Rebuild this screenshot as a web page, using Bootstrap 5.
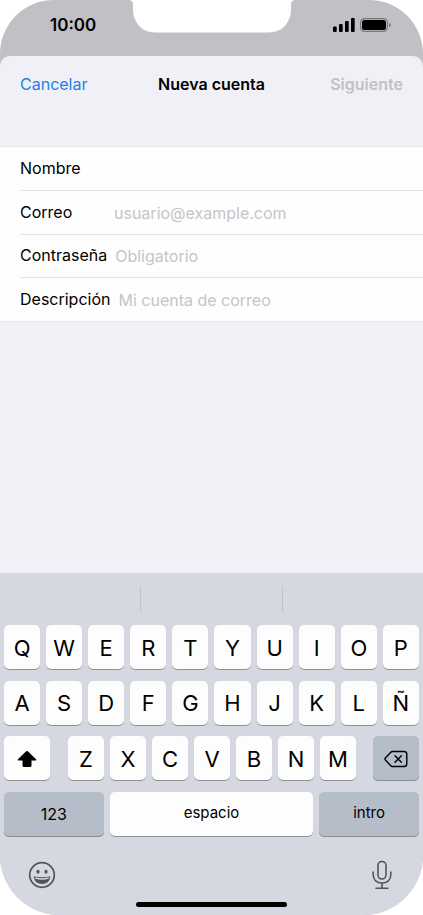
<!DOCTYPE html>
<html lang="es">
<head>
<meta charset="utf-8">
<meta name="viewport" content="width=device-width, initial-scale=1">
<title>Nueva cuenta</title>
<link href="https://cdn.jsdelivr.net/npm/bootstrap@5.3.0/dist/css/bootstrap.min.css" rel="stylesheet">
<style>
body { font-family: Inter, "Liberation Sans", sans-serif; font-size: 16px; line-height: 20px; color: #000; background: #fff; }
.phone { background: #c1c0c5; border-radius: 54px 54px 60px 60px; }
.status { display: grid; grid-template-columns: 1fr 168px 1fr; height: 56px; }
.status-side { height: 50px; }
.clock { font-size: 17px; padding-left: 50px; }
.signals { padding-right: 32px; gap: 5px; }
.sheet { background: #f1f0f6; border-radius: 10px 10px 0 0; }
.sheet-bar { display: grid; grid-template-columns: 1fr auto 1fr; padding: 18px 20px 52px; }
.bar-action { border: 0; background: none; padding: 0; color: #1a82e8; }
.bar-action:disabled { color: #c1c0c5; }
.fields { background: #fefefe; border-top: 1px solid #e4e4e8; border-bottom: 1px solid #e4e4e8; padding-left: 20px; }
.field { height: 43px; gap: 8px; padding-bottom: 2px; }
.field + .field { border-top: 1px solid #e4e4e6; }
.field:nth-child(even) { height: 44px; }
.field label { min-width: 86px; }
.field input { border: 0; outline: 0; background: none; padding: 2px 0 0; min-width: 0; }
.field input::placeholder { color: #c5c5c7; opacity: 1; }
.keyboard { background: #d5d8e0; }
.suggestions { height: 52px; padding: 13px 0; }
.suggestions button { border: 0; background: none; height: 26px; }
.suggestions button + button { border-left: 1px solid #c0c3ca; }
.keys { padding: 0 4px; height: 212px; }
.key-row { gap: 6px; }
.key { border: 0; padding: 0; height: 45px; border-radius: 5px; background: #fdfdfd; box-shadow: inset 0 -1px 0 #8c8f94; color: #000; font-size: 22px; flex: 1 1 0; min-width: 0; }
.key-dark { background: #b5bdc9; }
.key-digits { font-size: 16px; }
.key-word { font-size: 15px; padding-bottom: 2px; }
.key-side { flex: 0 0 46px; }
.shift { margin-right: 12px; }
.erase { margin-left: 11px; }
.key-space { flex: 0 0 49%; }
.tools { padding: 23px 31px 12px 28px; }
.tools button { border: 0; background: none; padding: 0; color: #50555c; line-height: 0; }
.home-bar { width: 151px; height: 5px; border-radius: 3px; background: #000; margin-bottom: 8px; }
svg { display: block; }
</style>
<script src="https://cdn.jsdelivr.net/npm/bootstrap@5.3.0/dist/js/bootstrap.bundle.min.js"></script>
</head>
<body>
<div class="phone min-vh-100 d-flex flex-column overflow-hidden">
  <header class="status">
    <div class="status-side clock d-flex align-items-center fw-semibold">10:00</div>
    <svg width="168" height="34" viewBox="0 0 168 34" aria-hidden="true"><path fill="#fff" d="M0 0Q5 0 5 5V11C6 24 15 32.500 27 32.500H141C153 32.500 162 24 163 11V5Q163 0 168 0Z"/></svg>
    <div class="status-side signals d-flex align-items-center justify-content-end">
      <svg width="23" height="14" viewBox="0 0 23 14" aria-hidden="true"><rect x="1" y="8.500" width="3.700" height="5.500" rx="1"/><rect x="7" y="6" width="3.700" height="8" rx="1"/><rect x="13" y="3" width="3.700" height="11" rx="1"/><rect x="19" y="0" width="3.700" height="14" rx="1"/></svg>
      <svg width="31" height="14" viewBox="0 0 31 14" aria-hidden="true"><rect x=".6" y=".6" width="26.800" height="12.800" rx="4" fill="none" stroke="#77777a" stroke-width="1.200"/><rect x="2" y="2" width="24" height="10" rx="2.500"/><path fill="#77777a" d="M29 4.800Q31 5.500 31 7T29 9.200Z"/></svg>
    </div>
  </header>

  <main class="sheet flex-grow-1 d-flex flex-column">
    <div class="sheet-bar align-items-center">
      <button type="button" class="bar-action text-start">Cancelar</button>
      <h1 class="fs-6 fw-semibold m-0 lh-sm">Nueva cuenta</h1>
      <button type="button" class="bar-action text-end fw-semibold" disabled>Siguiente</button>
    </div>
    <form class="fields">
      <div class="field d-flex align-items-center"><label for="nombre">Nombre</label><input class="flex-grow-1" id="nombre" type="text"></div>
      <div class="field d-flex align-items-center"><label for="correo">Correo</label><input class="flex-grow-1" id="correo" type="email" placeholder="usuario@example.com"></div>
      <div class="field d-flex align-items-center"><label for="clave">Contraseña</label><input class="flex-grow-1" id="clave" type="password" placeholder="Obligatorio"></div>
      <div class="field d-flex align-items-center"><label for="descripcion">Descripción</label><input class="flex-grow-1" id="descripcion" type="text" placeholder="Mi cuenta de correo"></div>
    </form>
  </main>

  <section class="keyboard" aria-label="Teclado">
    <div class="suggestions d-flex">
      <button type="button" class="flex-fill" aria-label="Sugerencia 1"></button>
      <button type="button" class="flex-fill" aria-label="Sugerencia 2"></button>
      <button type="button" class="flex-fill" aria-label="Sugerencia 3"></button>
    </div>
    <div class="keys d-flex flex-column justify-content-between">
      <div class="key-row d-flex">
        <button type="button" class="key">Q</button><button type="button" class="key">W</button><button type="button" class="key">E</button><button type="button" class="key">R</button><button type="button" class="key">T</button><button type="button" class="key">Y</button><button type="button" class="key">U</button><button type="button" class="key">I</button><button type="button" class="key">O</button><button type="button" class="key">P</button>
      </div>
      <div class="key-row d-flex">
        <button type="button" class="key">A</button><button type="button" class="key">S</button><button type="button" class="key">D</button><button type="button" class="key">F</button><button type="button" class="key">G</button><button type="button" class="key">H</button><button type="button" class="key">J</button><button type="button" class="key">K</button><button type="button" class="key">L</button><button type="button" class="key">Ñ</button>
      </div>
      <div class="key-row d-flex">
        <button type="button" class="key key-side shift" aria-label="Mayúsculas"><svg class="mx-auto" width="20" height="18" viewBox="0 0 20 18"><path d="M9.200 1.300Q10 .6 10.800 1.300L18.800 9Q20 10.500 18.300 10.500H14.500V15.500Q14.500 17 13 17H7Q5.500 17 5.500 15.500V10.500H1.700Q0 10.500 1.200 9Z"/></svg></button>
        <button type="button" class="key">Z</button><button type="button" class="key">X</button><button type="button" class="key">C</button><button type="button" class="key">V</button><button type="button" class="key">B</button><button type="button" class="key">N</button><button type="button" class="key">M</button>
        <button type="button" class="key key-dark key-side erase" aria-label="Borrar"><svg class="mx-auto" width="24" height="18" viewBox="0 0 24 18" fill="none" stroke="#000" stroke-width="1.400" stroke-linecap="round" stroke-linejoin="round"><path d="M8.500 1.500H20Q22.800 1.500 22.800 4.300V13.700Q22.800 16.500 20 16.500H8.500Q7.500 16.500 6.800 15.700L1.400 10Q.5 9 1.400 8L6.800 2.300Q7.500 1.500 8.500 1.500ZM11 5.700L17.400 12.300M17.400 5.700L11 12.300"/></svg></button>
      </div>
      <div class="key-row d-flex">
        <button type="button" class="key key-dark key-digits">123</button>
        <button type="button" class="key key-word key-space">espacio</button>
        <button type="button" class="key key-dark key-word">intro</button>
      </div>
    </div>
    <div class="tools d-flex align-items-center justify-content-between">
      <button type="button" aria-label="Emojis"><svg width="28" height="30" viewBox="0 0 28 30" fill="none" stroke="currentColor" stroke-width="1.700"><circle cx="14" cy="15" r="12.300"/><ellipse cx="10" cy="11.800" rx="1.600" ry="2" fill="currentColor" stroke="none"/><ellipse cx="18" cy="11.800" rx="1.600" ry="2" fill="currentColor" stroke="none"/><path stroke="none" fill="currentColor" d="M5.600 16.200Q14 18.300 22.400 16.200Q21.500 24 14 24T5.600 16.200Z"/><path stroke="#d5d8e0" stroke-width="1.400" d="M7.200 17.800Q14 20.200 20.800 17.800"/></svg></button>
      <button type="button" aria-label="Dictado"><svg width="20" height="30" viewBox="0 0 20 30" fill="none" stroke="currentColor" stroke-width="1.600" stroke-linecap="round"><rect x="6" y="1.500" width="8" height="17.500" rx="4"/><path d="M1.200 12V14.500C1.200 20 4.800 23 10 23S18.800 20 18.800 14.500V12M10 23V28.300M4 28.300H16"/></svg></button>
    </div>
    <div class="home-bar mx-auto"></div>
  </section>
</div>
</body>
</html>
